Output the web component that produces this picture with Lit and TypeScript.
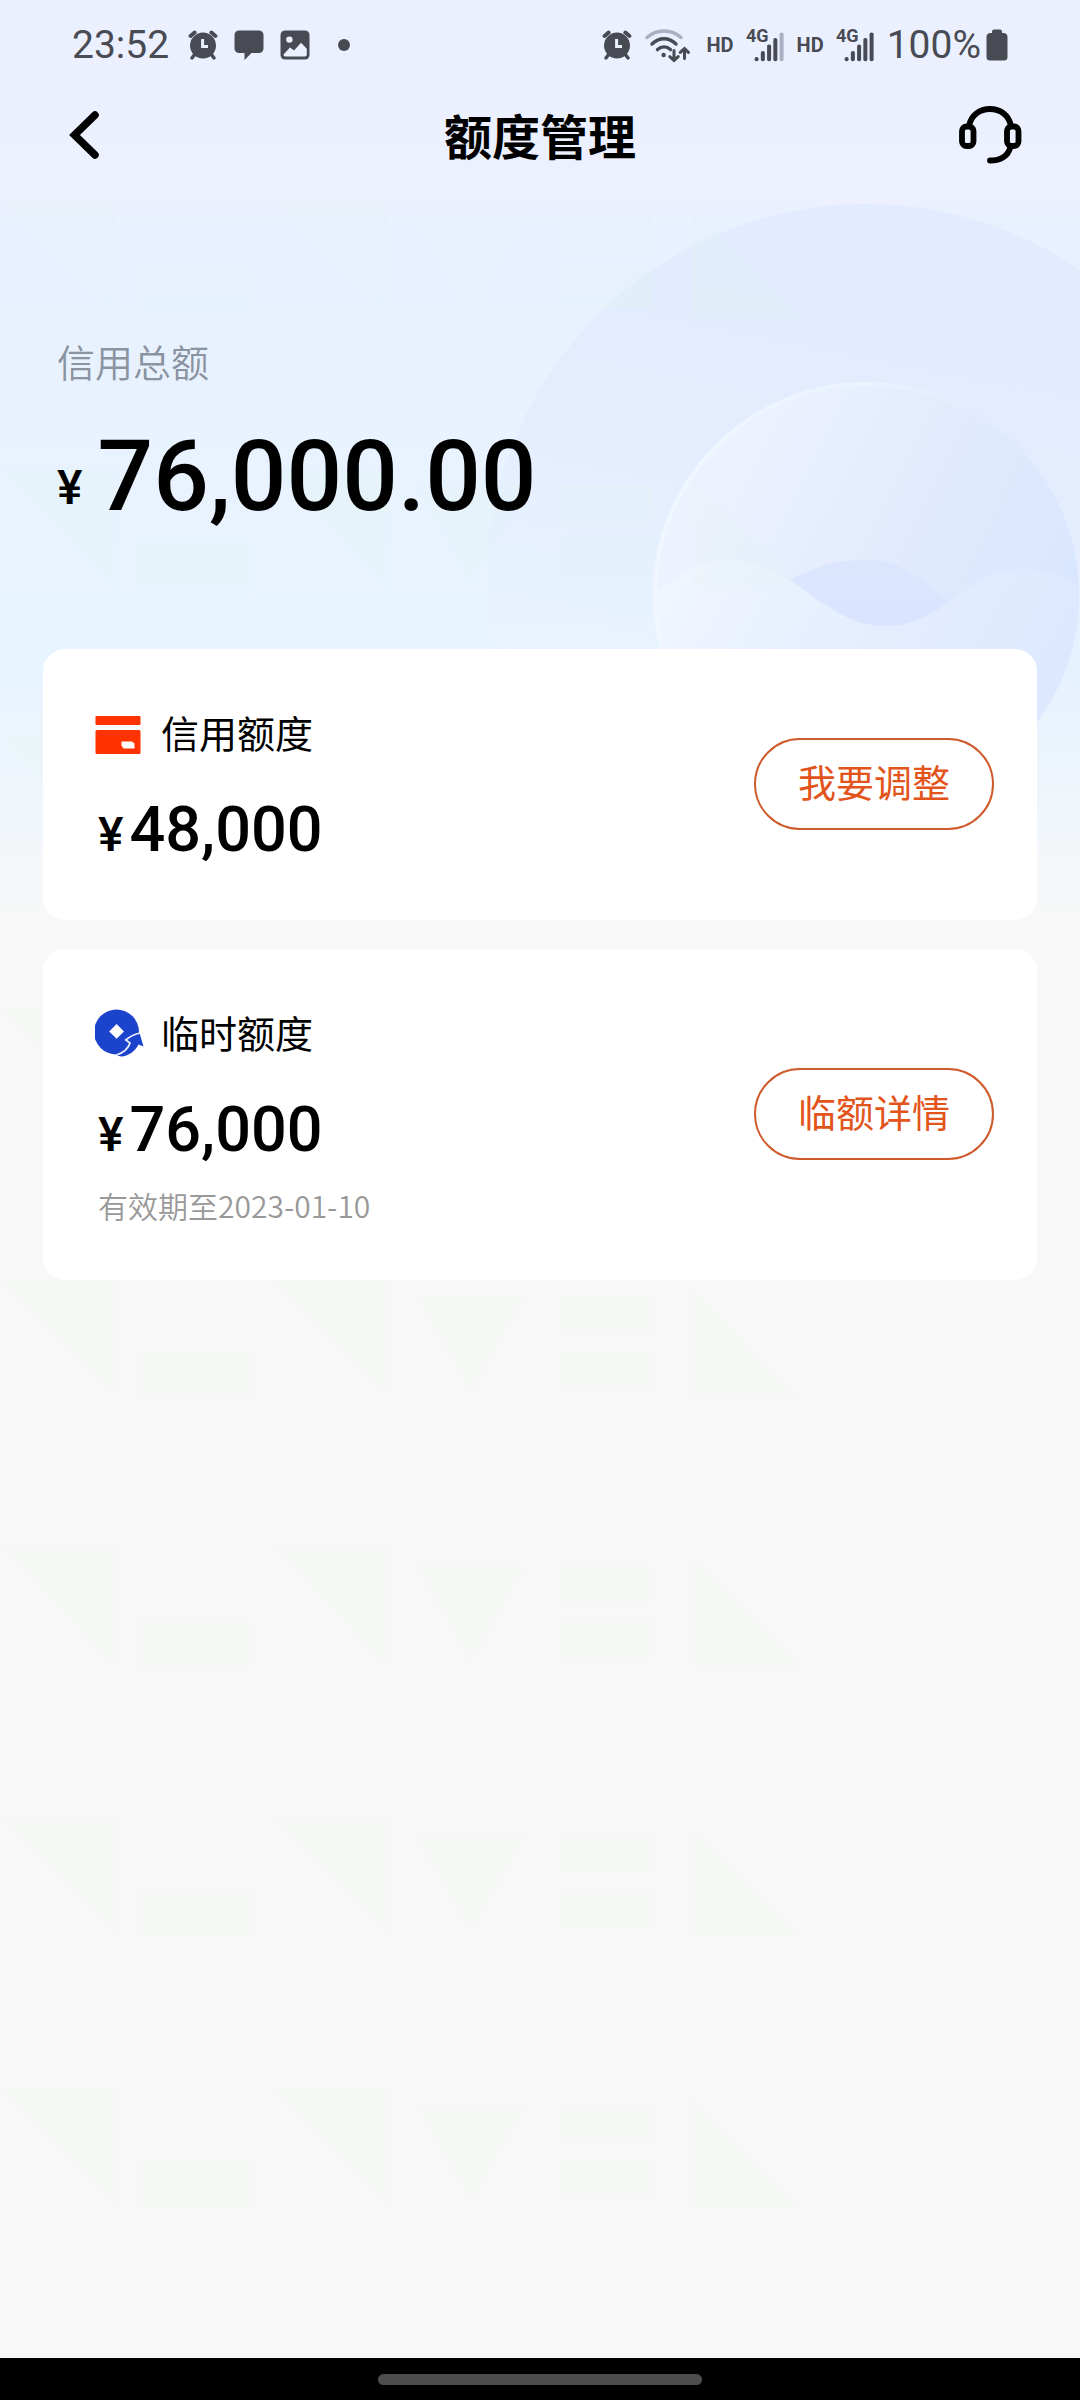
import { LitElement, html, css, svg, nothing } from "lit";
import { customElement, property } from "lit/decorators.js";

const alarmIcon = html`
  <svg class="icon alarm" width="30" height="30" viewBox="0 0 30 30" role="img" aria-label="闹钟">
    <g fill="none" stroke="currentColor" stroke-linecap="round">
      <path d="M2.6 6 6.6 2.6M27.4 6 23.4 2.6" stroke-width="4" />
      <path d="M7 24 4 28M23 24 26 28" stroke-width="3.4" />
    </g>
    <circle cx="15" cy="15.6" r="13" fill="currentColor" />
    <path d="M14.6 9V16.4H20" fill="none" stroke="#ebf0ff" stroke-width="3" />
  </svg>
`;

const chatIcon = html`
  <svg class="icon" width="30" height="30" viewBox="0 0 30 30" role="img" aria-label="消息">
    <path
      d="M5 0.5H25A4.5 4.5 0 0 1 29.5 5V18.5A4.5 4.5 0 0 1 25 23H17.5L10.5 30V23H5A4.5 4.5 0 0 1 0.5 18.5V5A4.5 4.5 0 0 1 5 0.5Z"
      fill="currentColor"
    />
  </svg>
`;

const photoIcon = html`
  <svg class="icon" width="30" height="30" viewBox="0 0 30 30" role="img" aria-label="图片">
    <rect x="0.5" y="0.5" width="29" height="29" rx="4.5" fill="currentColor" />
    <circle cx="9.4" cy="9.6" r="3.2" fill="#ebf0ff" />
    <path
      d="M3.5 24.5 10 17.5 14 20.6 21 12.8 26.8 18.8V24.5A2 2 0 0 1 24.8 26.5H5.5A2 2 0 0 1 3.5 24.5Z"
      fill="#ebf0ff"
    />
  </svg>
`;

const wifiIcon = html`
  <svg class="icon wifi" width="46" height="36" viewBox="0 0 46 36" role="img" aria-label="无线网络">
    <g fill="none" stroke="currentColor" stroke-width="3.4" stroke-linecap="round">
      <path d="M3 10.5C12.5 1.8 27.5 1.8 37 10.5" stroke="#aab0c2" />
      <path d="M8 17C15 10 25 10 32 17" />
      <path d="M13.5 22.6C17.5 19 22.5 19 26.5 22.6" />
      <path d="M30 23.5V33M25.8 29.6 30 33.4 34.2 29.6" stroke-width="3" />
      <path d="M40.5 31.5V22M36.3 25.4 40.5 21.6 44.4 25.4" stroke-width="3" />
    </g>
    <circle cx="19.6" cy="28" r="2.2" fill="currentColor" />
  </svg>
`;

const batteryIcon = html`
  <svg class="icon" width="22" height="32" viewBox="0 0 22 32" role="img" aria-label="电池已满">
    <path
      d="M8 0.5H14A2 2 0 0 1 16 2.5V4H18A4 4 0 0 1 21.5 8V28A3.5 3.5 0 0 1 18 31.5H4A3.5 3.5 0 0 1 0.5 28V8A4 4 0 0 1 4 4H6V2.5A2 2 0 0 1 8 0.5Z"
      fill="currentColor"
    />
  </svg>
`;

const BAR_TOPS = [29, 23, 16.5, 10, 4.5];

const signalIcon = (level: number) => html`
  <svg class="icon" width="39" height="46" viewBox="0 -6 39 46" role="img" aria-label="4G 信号">
    <text class="net" x="0" y="14">4G</text>
    ${BAR_TOPS.map(
      (top, i) => svg`<rect x=${8.6 + i * 6.25} y=${top} width="4" height=${33.2 - top} rx="1.8"
        fill=${i < level ? "currentColor" : "#aab0c2"} />`,
    )}
  </svg>
`;

const creditCardIcon = html`
  <svg class="icon" width="48" height="48" viewBox="0 0 48 48" aria-hidden="true">
    <rect x="0.5" y="8" width="45" height="9" rx="1" fill="#ff3300" />
    <rect x="0.5" y="22" width="45" height="24" rx="1.5" fill="#ff3300" />
    <path d="M26.5 33.5H37L39.5 35.5V40.5H28.5L26.5 37.5Z" fill="#fff" />
  </svg>
`;

const coinIcon = html`
  <svg class="icon" width="50" height="50" viewBox="0 0 50 50" aria-hidden="true">
    <circle cx="21.5" cy="25" r="22.5" fill="#1c43cc" />
    <path d="M21.6 17 29 24.4 21.6 31.8 14.2 24.4Z" fill="#fff" />
    <path
      d="M22 48.4C29 45 33.5 40.5 35 36L30.5 33.5C34 30 39 28 44.7 26.5L48.5 39.5 43.5 37.5C40 44.5 33.5 49 26 49.5Z"
      fill="#1c43cc"
    />
    <path
      d="M21.5 48C29 45.5 33.5 41 35 36L30.8 33C34.5 29.5 39 27.5 45 26"
      fill="none"
      stroke="#e9efff"
      stroke-width="1.8"
    />
  </svg>
`;

const ICONS = { card: creditCardIcon, coin: coinIcon };

@customElement("status-bar")
class StatusBar extends LitElement {
  static styles = css`
    :host {
      display: block;
      color: #484b53;
      font-family: Roboto, "Liberation Sans", sans-serif;
    }
    .bar {
      box-sizing: border-box;
      display: flex;
      justify-content: space-between;
      align-items: center;
      height: 88px;
      padding: 2px 72px 0;
    }
    .group {
      display: flex;
      align-items: center;
      gap: 12px;
    }
    .alerts {
      gap: 16px;
    }
    .icon {
      display: block;
      flex: none;
    }
    .wifi {
      margin-right: 4px;
    }
    .clock,
    .charge {
      font-size: 39px;
      line-height: 48px;
    }
    .clock {
      margin-right: 3px;
    }
    .charge {
      margin-right: -7px;
    }
    .hd {
      font-size: 20px;
      line-height: 24px;
      font-weight: 700;
    }
    .net {
      font-size: 18px;
      font-weight: 700;
      fill: currentColor;
    }
    .dot {
      width: 12px;
      height: 12px;
      margin-left: 12px;
      border-radius: 50%;
      background: currentColor;
    }
  `;

  render() {
    return html`
      <div class="bar">
        <div class="group alerts">
          <span class="clock">23:52</span>
          ${alarmIcon} ${chatIcon} ${photoIcon}
          <span class="dot"></span>
        </div>
        <div class="group">
          ${alarmIcon} ${wifiIcon}
          <span class="hd">HD</span>
          ${signalIcon(4)}
          <span class="hd">HD</span>
          ${signalIcon(5)}
          <span class="charge">100%</span>
          ${batteryIcon}
        </div>
      </div>
    `;
  }
}

@customElement("quota-card")
class QuotaCard extends LitElement {
  @property() name = "";
  @property() amount = "";
  @property() note = "";
  @property() action = "";
  @property() icon: keyof typeof ICONS = "card";

  static styles = css`
    :host {
      display: block;
    }
    .card {
      display: flex;
      align-items: center;
      justify-content: space-between;
      padding: 55px 43px 54px 52px;
      border-radius: 22px;
      background: #fff;
    }
    .head {
      display: flex;
      align-items: center;
      height: 56px;
    }
    .mark {
      width: 66px;
    }
    .icon {
      display: block;
    }
    .name {
      margin: 0;
      font-size: 38px;
      line-height: 56px;
      font-weight: 400;
      color: #000;
    }
    .amount {
      display: flex;
      align-items: baseline;
      gap: 6px;
      margin: 34px 0 0 3px;
      font-family: Roboto, "Liberation Sans", sans-serif;
      font-weight: 500;
      font-size: 63px;
      line-height: 72px;
      color: #000;
    }
    .yen {
      font-size: 48px;
      line-height: 48px;
    }
    .note {
      margin: 18px 0 0 3px;
      font-size: 30px;
      line-height: 42px;
      font-weight: 350;
      color: #999;
    }
    .action {
      box-sizing: border-box;
      flex: none;
      width: 240px;
      height: 92px;
      margin-bottom: 2px;
      padding: 0 0 6px;
      border: 2px solid #cf5a2b;
      border-radius: 46px;
      background: transparent;
      font: inherit;
      font-size: 38px;
      line-height: 56px;
      color: #e2541b;
      cursor: pointer;
    }
  `;

  render() {
    return html`
      <article class="card">
        <div>
          <div class="head">
            <span class="mark">${ICONS[this.icon]}</span>
            <h2 class="name">${this.name}</h2>
          </div>
          <div class="amount"><span class="yen">¥</span><span>${this.amount}</span></div>
          ${this.note ? html`<p class="note">${this.note}</p>` : nothing}
        </div>
        <button class="action" type="button">${this.action}</button>
      </article>
    `;
  }
}

@customElement("app-root")
class AppRoot extends LitElement {
  static styles = css`
    :host {
      display: block;
      font-family: "Noto Sans CJK SC", "Noto Sans", sans-serif;
    }
    .screen {
      position: relative;
      isolation: isolate;
      display: flex;
      flex-direction: column;
      min-height: 100vh;
      overflow: hidden;
      background: linear-gradient(
          #ebf0ff 0,
          #ecf0ff 200px,
          #e8f1ff 232px,
          #e8f3ff 480px,
          #e8f4ff 680px,
          #f8f8f8 930px
        )
        #f8f8f8;
    }
    .art {
      position: absolute;
      z-index: -1;
      top: 0;
      right: 0;
      width: 1080px;
      height: 1000px;
    }
    .texture {
      position: absolute;
      z-index: -1;
      inset: 0;
      width: 100%;
      height: 100%;
    }
    .nav {
      display: grid;
      grid-template-columns: 1fr auto 1fr;
      align-items: center;
      height: 96px;
      padding: 0 56px;
    }
    .tool {
      display: block;
      padding: 0;
      border: 0;
      background: none;
      color: #000;
      cursor: pointer;
    }
    .help {
      justify-self: end;
    }
    .icon {
      display: block;
    }
    .title {
      margin: 0 0 4px;
      font-size: 48px;
      line-height: 64px;
      font-weight: 700;
      color: #000;
    }
    .total {
      padding: 149px 57px 122px;
    }
    .label {
      margin: 0;
      font-size: 38px;
      line-height: 56px;
      font-weight: 350;
      color: #8b92a0;
    }
    .sum {
      display: flex;
      align-items: flex-end;
      gap: 15px;
      margin-top: 38px;
      font-family: Roboto, "Liberation Sans", sans-serif;
      font-weight: 500;
      font-size: 98px;
      line-height: 100px;
      color: #000;
    }
    .yen {
      font-size: 48px;
      line-height: 78px;
    }
    .cards {
      flex: 1;
      display: flex;
      flex-direction: column;
      gap: 29px;
      padding: 0 43px 40px;
    }
    .gesture {
      display: flex;
      align-items: center;
      justify-content: center;
      height: 42px;
      background: #000;
    }
    .pill {
      width: 30%;
      height: 11px;
      border-radius: 6px;
      background: #4d4d4d;
    }
  `;

  private art() {
    return html`
      <svg class="art" viewBox="0 0 1080 1000" aria-hidden="true">
        <defs>
          <linearGradient id="halo" x1="0.2" y1="0" x2="0" y2="1">
            <stop offset="0" stop-color="#e2ecfe" />
            <stop offset="0.3" stop-color="#e4edfe" />
            <stop offset="0.5" stop-color="#e5effe" stop-opacity="0.4" />
            <stop offset="0.68" stop-color="#e8f2fe" stop-opacity="0" />
          </linearGradient>
          <linearGradient id="orb" x1="0.15" y1="0.2" x2="0.95" y2="0.6">
            <stop offset="0" stop-color="#edf2ff" />
            <stop offset="0.5" stop-color="#e2ebfd" />
            <stop offset="1" stop-color="#d8e6ff" />
          </linearGradient>
          <linearGradient id="rim" x1="0" y1="0" x2="1" y2="0">
            <stop offset="0" stop-color="#f1f7ff" />
            <stop offset="0.5" stop-color="#ebf3ff" />
            <stop offset="0.85" stop-color="#e4eeff" stop-opacity="0" />
          </linearGradient>
          <linearGradient id="front" x1="0" y1="0" x2="1" y2="0.3">
            <stop offset="0" stop-color="#f2f6ff" />
            <stop offset="0.4" stop-color="#e7f0fe" />
            <stop offset="1" stop-color="#dde8ff" />
          </linearGradient>
          <linearGradient id="back" x1="0" y1="0" x2="0" y2="1">
            <stop offset="0" stop-color="#dbe6fe" />
            <stop offset="1" stop-color="#d8e2ff" />
          </linearGradient>
          <clipPath id="orb-clip"><circle cx="866" cy="595" r="213" /></clipPath>
        </defs>
        <circle cx="866" cy="584" r="380" fill="url(#halo)" />
        <circle cx="866" cy="595" r="213" fill="url(#orb)" />
        <g clip-path="url(#orb-clip)">
          <path d="M760 600C800 570 830 560 868 560C906 560 925 584 949 601L920 660H790Z" fill="url(#back)" />
          <path
            d="M650 600C675 574 700 560 731 560C795 560 822 626 886 626C945 626 965 569 1025 569C1046 569 1062 577 1080 586V810H650Z"
            fill="url(#front)"
          />
        </g>
        <circle cx="866" cy="595" r="211" fill="none" stroke="url(#rim)" stroke-width="4" />
      </svg>
    `;
  }

  private texture() {
    return html`
      <svg class="texture" aria-hidden="true">
        <defs>
          <pattern id="marks" y="198" width="1080" height="270" patternUnits="userSpaceOnUse">
            <path
              d="M0 0H117V120ZM137 72H252V120H137ZM272 0H389V120ZM416 17H526L471 116ZM560 17H653V55H560ZM560 72H653V111H560ZM692 8 802 120H692Z"
              fill="#dcf8dc"
              fill-opacity="0.1"
            />
          </pattern>
        </defs>
        <rect y="198" width="100%" height="2160" fill="url(#marks)" />
      </svg>
    `;
  }

  render() {
    return html`
      <div class="screen">
        ${this.art()} ${this.texture()}
        <status-bar></status-bar>
        <header class="nav">
          <button class="tool" type="button" aria-label="返回">
            <svg class="icon" width="56" height="56" viewBox="0 0 56 56" aria-hidden="true">
              <path
                d="M39 7 18.5 27 39 47"
                fill="none"
                stroke="currentColor"
                stroke-width="7.5"
                stroke-linecap="round"
              />
            </svg>
          </button>
          <h1 class="title">额度管理</h1>
          <button class="tool help" type="button" aria-label="客服">
            <svg class="icon" width="65" height="60" viewBox="0 0 65 60" aria-hidden="true">
              <g fill="none" stroke="currentColor" stroke-width="5.8" stroke-linecap="round">
                <rect x="3" y="20.5" width="11.5" height="19.5" rx="4.5" />
                <rect x="48" y="20.5" width="11.5" height="19.5" rx="4.5" />
                <path d="M10 20C12 9 21 3 31 3S50 9 52 20" />
                <path d="M51.5 41C49 50 42 54.5 31 54.5" />
              </g>
            </svg>
          </button>
        </header>
        <section class="total">
          <p class="label">信用总额</p>
          <div class="sum"><span class="yen">¥</span><span>76,000.00</span></div>
        </section>
        <main class="cards">
          <quota-card icon="card" name="信用额度" amount="48,000" action="我要调整"></quota-card>
          <quota-card
            icon="coin"
            name="临时额度"
            amount="76,000"
            note="有效期至2023-01-10"
            action="临额详情"
          ></quota-card>
        </main>
        <footer class="gesture"><span class="pill"></span></footer>
      </div>
    `;
  }
}
